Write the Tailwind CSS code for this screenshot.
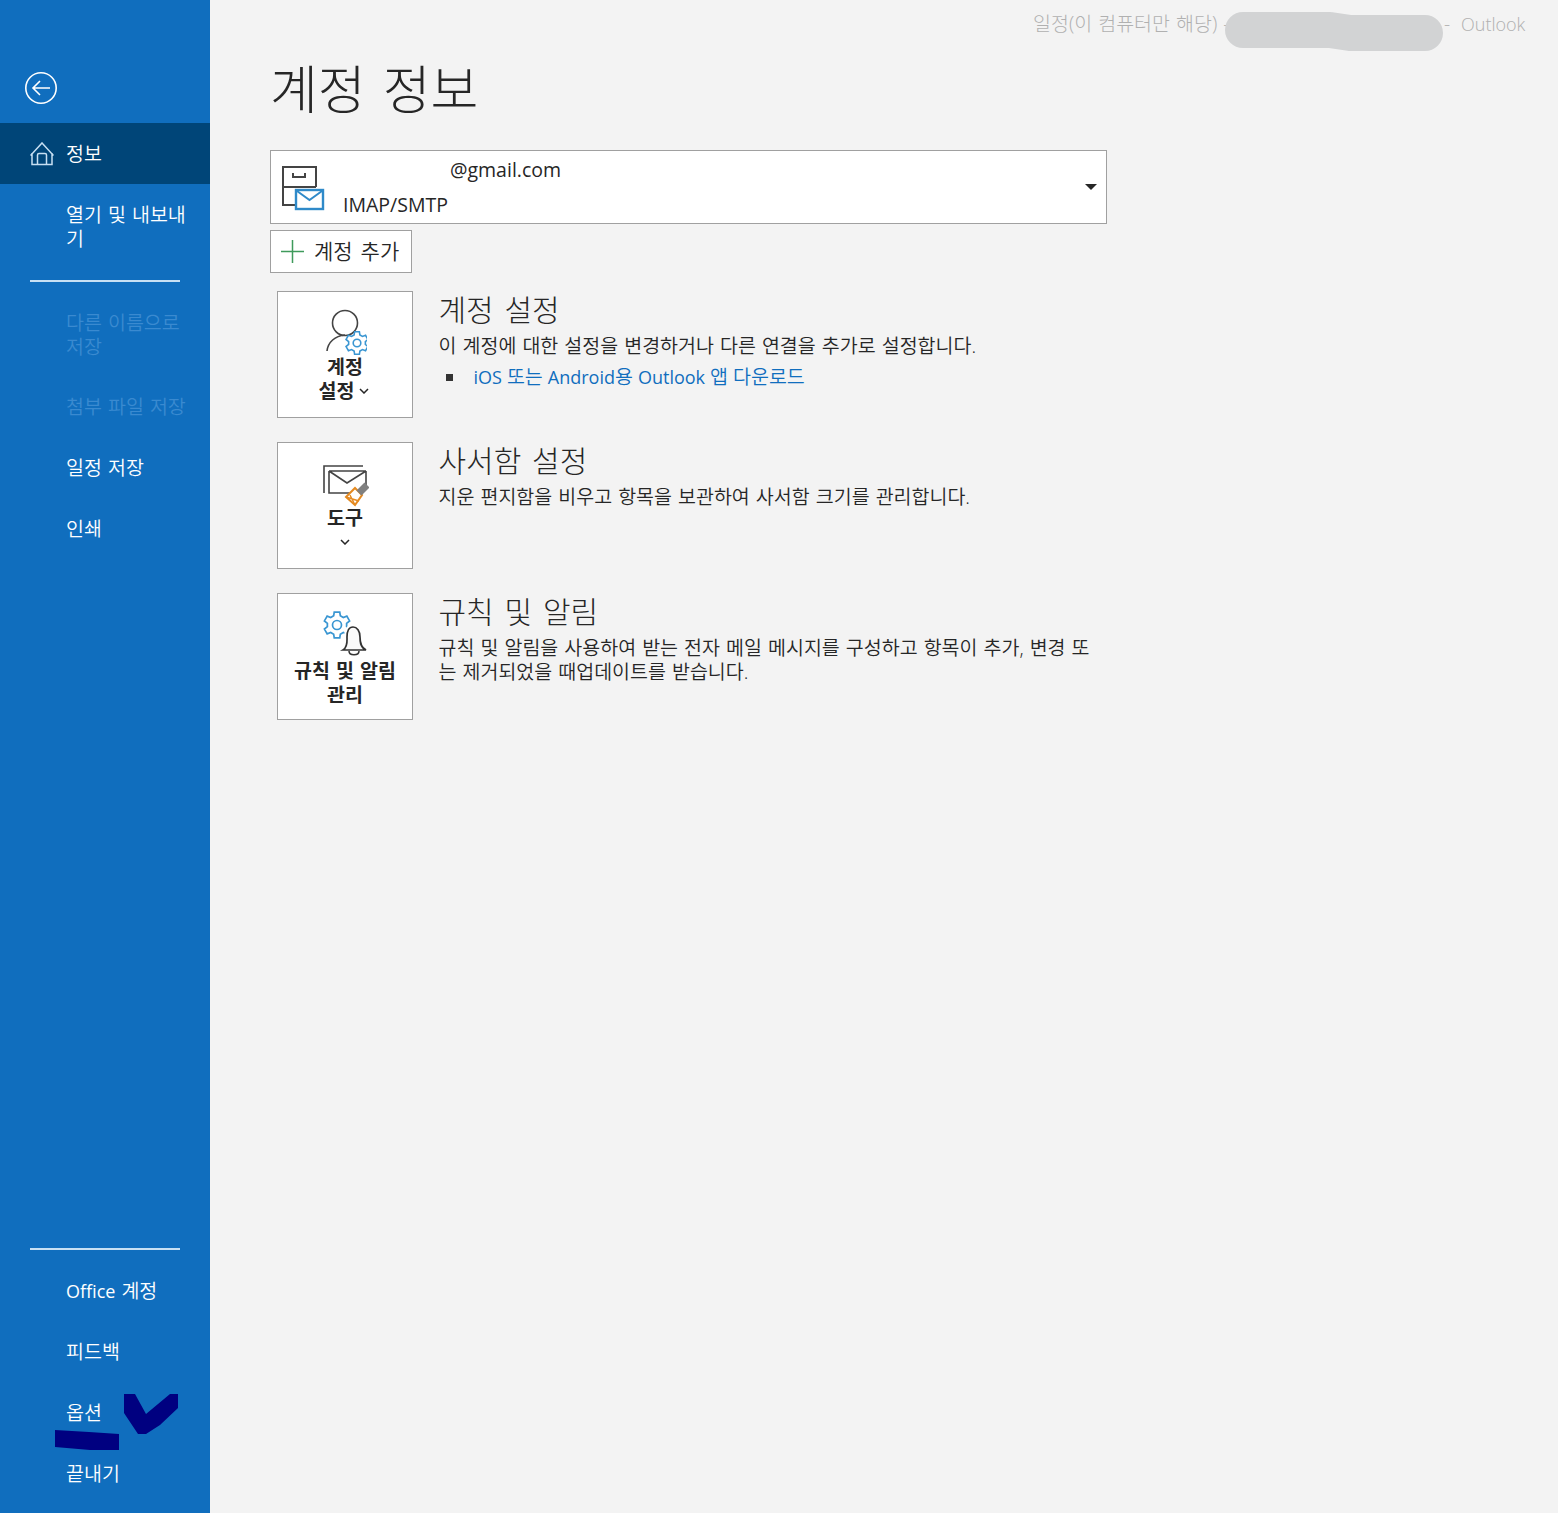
<!DOCTYPE html>
<html lang="ko">
<head>
<meta charset="utf-8">
<script src="https://cdn.jsdelivr.net/npm/@tailwindcss/browser@4"></script>
</head>
<body class="m-0 bg-[#f3f3f3]">
<div class="relative flex h-[1513px] w-[1558px] overflow-hidden bg-[#f3f3f3] font-['Open_Sans','Noto_Sans_CJK_KR',sans-serif] text-[#262626]">
  <aside class="flex h-full w-[210px] shrink-0 flex-col bg-[#106ebe] text-[19.5px] font-[350] leading-[24px] text-white [word-spacing:1px]">
    <div class="flex h-[123px] items-end pb-[19px] pl-[25px]">
      <svg class="h-[32px] w-[32px]" viewBox="0 0 32 32" fill="none" stroke="#fff" stroke-width="1.6"><circle cx="16" cy="16" r="15.2"/><path d="M25 16H8M15 9l-7 7 7 7"/></svg>
    </div>
    <div class="flex h-[61px] items-center gap-[12px] bg-[#004578] pl-[30px]">
      <svg class="h-[24px] w-[24px]" viewBox="0 0 24 24" fill="none" stroke="#c7dff2" stroke-width="1.5"><path d="M.5 13.500 12 1l11.500 12.500M2 11v11.500h20V11M7.500 22.500V13q0-1.500 1.500-1.500h6q1.500 0 1.500 1.500v9.500"/></svg>
      <span>정보</span>
    </div>
    <div class="h-[84px] pl-[66px] pr-[20px] pt-[19px]">열기 및 내보내기</div>
    <div class="mx-[30px] my-[12px] h-[2px] shrink-0 bg-[#c7e0f4]"></div>
    <div class="h-[82px] pl-[66px] pr-[20px] pt-[17px] text-[#3a8ad0]">다른 이름으로 저장</div>
    <div class="flex h-[61px] items-center pl-[66px] text-[#3a8ad0]">첨부 파일 저장</div>
    <div class="flex h-[61px] items-center pl-[66px]">일정 저장</div>
    <div class="flex h-[61px] items-center pl-[66px]">인쇄</div>
    <div class="mt-auto mx-[30px] mb-[11px] h-[2px] shrink-0 bg-[#c7e0f4]"></div>
    <div class="flex h-[60px] items-center gap-[6px] pl-[66px]"><span class="text-[18px] font-normal">Office</span><span>계정</span></div>
    <div class="flex h-[61px] items-center pl-[66px]">피드백</div>
    <div class="flex h-[61px] items-center pl-[66px]">옵션</div>
    <div class="mb-[9px] flex h-[61px] items-center pl-[66px]">끝내기</div>
  </aside>

  <main class="min-w-0 flex-1 pl-[60px] font-[350] [word-spacing:1px]">
    <div class="h-[150px] pt-[54px]">
      <h1 class="m-0 text-[52px] font-light leading-[70px] [word-spacing:3.5px]">계정 정보</h1>
    </div>
    <div class="flex h-[74px] w-[837px] border border-[#a0a0a0] bg-white">
      <svg class="ml-[10px] mt-[14px] h-[48px] w-[44px] shrink-0" viewBox="0 0 44 48" fill="none"><path d="M35 22V2H2v38h12M2 22h33" stroke="#444" stroke-width="2"/><path d="M12 8v4h12V8" stroke="#444" stroke-width="2"/><rect x="15" y="25" width="27" height="19" fill="#fff" stroke="#2f8ac9" stroke-width="2.400"/><path d="m16 26 12.500 9L41 26" stroke="#2f8ac9" stroke-width="2"/></svg>
      <div class="relative flex-1 text-[19.5px] font-normal leading-[24px]">
        <div class="pl-[125px] pt-[7px]">@gmail.com</div>
        <div class="pl-[18px] pt-[11px]">IMAP/SMTP</div>
        <svg class="absolute right-[9px] top-[33px] h-[6px] w-[12px]" viewBox="0 0 12 6"><path d="M0 0h12L6 6z" fill="#262626"/></svg>
      </div>
    </div>
    <div class="mt-[6px] flex h-[43px] w-[142px] items-center gap-[10px] border border-[#a0a0a0] bg-white pl-[10px] text-[21px] [word-spacing:2.5px]">
      <svg class="h-[23px] w-[23px] shrink-0" viewBox="0 0 23 23" stroke="#3f9a5b" stroke-width="1.500"><path d="M11.500 0v23M0 11.500h23"/></svg>
      <span>계정 추가</span>
    </div>

    <section class="ml-[7px] mt-[18px] flex h-[127px] gap-[25.5px]">
      <div class="flex h-[127px] w-[136px] shrink-0 flex-col items-center border border-[#a0a0a0] bg-white pt-[16px] text-[19.5px] font-bold leading-[24px]">
        <svg class="h-[48px] w-[44px] shrink-0" viewBox="0 0 44 48" fill="none"><circle cx="22" cy="15" r="12.500" stroke="#444" stroke-width="1.600"/><path d="M4 43c1-9 8-15 18-16" stroke="#444" stroke-width="1.600"/><path transform="translate(34 35)" d="M-2.400-11.250 2.400-11.250 2.900-8 5.460-6.510 8.550-7.690 10.940-3.550 8.370-1.480V1.480L10.940 3.550 8.550 7.690 5.460 6.510 2.900 8 2.400 11.250H-2.400L-2.900 8-5.460 6.510-8.550 7.690-10.940 3.550-8.370 1.480V-1.480L-10.940-3.550-8.550-7.690-5.460-6.510-2.900-8z" fill="#fff" stroke="#3a96d2" stroke-width="1.600"/><circle cx="34" cy="35" r="3.800" stroke="#3a96d2" stroke-width="1.600"/></svg>
        <span class="-mt-[1px]">계정</span>
        <span class="-ml-[2px] flex items-center gap-[5px]">설정 <svg class="h-[6px] w-[10px]" viewBox="0 0 10 6" fill="none" stroke="#262626" stroke-width="1.500"><path d="m1 1 4 4 4-4"/></svg></span>
      </div>
      <div>
        <h2 class="m-0 pt-[1px] text-[30px] font-light leading-[36px] [word-spacing:3px]">계정 설정</h2>
        <p class="m-0 mt-[6px] text-[19.5px] leading-[24px]">이 계정에 대한 설정을 변경하거나 다른 연결을 추가로 설정합니다.</p>
        <p class="m-0 mt-[7px] flex items-center gap-[5px] text-[19.5px] leading-[24px] text-[#106ebe]"><span class="ml-[7px] mr-[16px] h-[7px] w-[7px] bg-[#333]"></span><span class="text-[18px] font-normal">iOS</span><span>또는</span><span class="-mr-[5px] text-[18px] font-normal">Android</span><span>용</span><span class="text-[18px] font-normal">Outlook</span><span>앱</span><span>다운로드</span></p>
      </div>
    </section>

    <section class="ml-[7px] mt-[24px] flex h-[127px] gap-[25.5px]">
      <div class="flex h-[127px] w-[136px] shrink-0 flex-col items-center border border-[#a0a0a0] bg-white pt-[21px] text-[19.5px] font-bold leading-[24px]">
        <svg class="h-[44px] w-[48px] shrink-0" viewBox="0 0 48 44" fill="none"><path d="M3 29V2h39" stroke="#444" stroke-width="1.600"/><path d="M8 7v22h22M45 7v14M8 7h37M8 7l18 12L45 7" stroke="#444" stroke-width="1.600"/><path d="m25 33 9-9 7 7-7 10z" fill="#fff" stroke="#e58a21" stroke-width="2"/><path d="m29 31 5 10M25 33l13 4" stroke="#e58a21" stroke-width="1.400"/><path d="m38 29 8-8" stroke="#808080" stroke-width="7"/></svg>
        <span class="mt-[-2px]">도구</span>
        <svg class="mt-[9px] h-[6px] w-[10px]" viewBox="0 0 10 6" fill="none" stroke="#262626" stroke-width="1.500"><path d="m1 1 4 4 4-4"/></svg>
      </div>
      <div>
        <h2 class="m-0 pt-[1px] text-[30px] font-light leading-[36px] [word-spacing:3px]">사서함 설정</h2>
        <p class="m-0 mt-[6px] text-[19.5px] leading-[24px]">지운 편지함을 비우고 항목을 보관하여 사서함 크기를 관리합니다.</p>
      </div>
    </section>

    <section class="ml-[7px] mt-[24px] flex h-[127px] gap-[25.5px]">
      <div class="flex h-[127px] w-[136px] shrink-0 flex-col items-center border border-[#a0a0a0] bg-white pt-[16px] text-[19.5px] font-bold leading-[24px] [word-spacing:1px]">
        <svg class="h-[48px] w-[46px] shrink-0" viewBox="0 0 46 48" fill="none"><path transform="translate(15 15) scale(1.150)" d="M-2.400-11.250 2.400-11.250 2.900-8 5.460-6.510 8.550-7.690 10.940-3.550 8.370-1.480V1.480L10.940 3.550 8.550 7.690 5.460 6.510 2.900 8 2.400 11.250H-2.400L-2.900 8-5.460 6.510-8.550 7.690-10.940 3.550-8.370 1.480V-1.480L-10.940-3.550-8.550-7.690-5.460-6.510-2.900-8z" stroke="#3a96d2" stroke-width="1.500"/><circle cx="15" cy="15" r="4.500" stroke="#3a96d2" stroke-width="1.700"/><path d="M21 40c5-3 4-9 4-13 0-6 2-10 6-10s7 4 7 10c0 4 0 10 6 13z" fill="#fff" stroke="#fff" stroke-width="6"/><path d="M21 40c5-3 4-9 4-13 0-6 2-10 6-10s7 4 7 10c0 4 0 10 6 13z" fill="#fafafa" stroke="#333" stroke-width="1.700"/><path d="M27 41c0 5 10 5 10 0" stroke="#333" stroke-width="1.500"/></svg>
        <span class="mt-[1px]">규칙 및 알림</span>
        <span>관리</span>
      </div>
      <div class="w-[660px]">
        <h2 class="m-0 pt-[1px] text-[30px] font-light leading-[36px] [word-spacing:3px]">규칙 및 알림</h2>
        <p class="m-0 mt-[6px] text-[19.5px] leading-[24px]">규칙 및 알림을 사용하여 받는 전자 메일 메시지를 구성하고 항목이 추가, 변경 또는 제거되었을 때업데이트를 받습니다.</p>
      </div>
    </section>
  </main>

  <div class="absolute left-[1033px] top-[12px] whitespace-nowrap text-[19.5px] font-light leading-[24px] text-[#b0b0b0] [word-spacing:1px]">일정(이 컴퓨터만 해당) -</div>
  <svg class="absolute left-[1225px] top-[12px] h-[40px] w-[218px]" viewBox="0 0 218 40" fill="none"><path d="M18 18h87l20 3h75" stroke="#d2d3d4" stroke-width="36" stroke-linecap="round" stroke-linejoin="round"/></svg>
  <span class="absolute left-[1444px] top-[12px] text-[19px] font-light leading-[24px] text-[#b0b0b0]">-</span>
  <span class="absolute left-[1461px] top-[12px] text-[18px] font-light leading-[24px] text-[#b0b0b0]">Outlook</span>
  <svg class="absolute left-[54px] top-[1393px] h-[58px] w-[126px]" viewBox="0 0 126 58" fill="#000080"><path d="m1 37 34 2 30 2v16H36L1 54z"/><path d="M70 1h11l11 20L116 1h8v14L106 32l-14 9h-8L70 20z"/></svg>
</div>
</body>
</html>
